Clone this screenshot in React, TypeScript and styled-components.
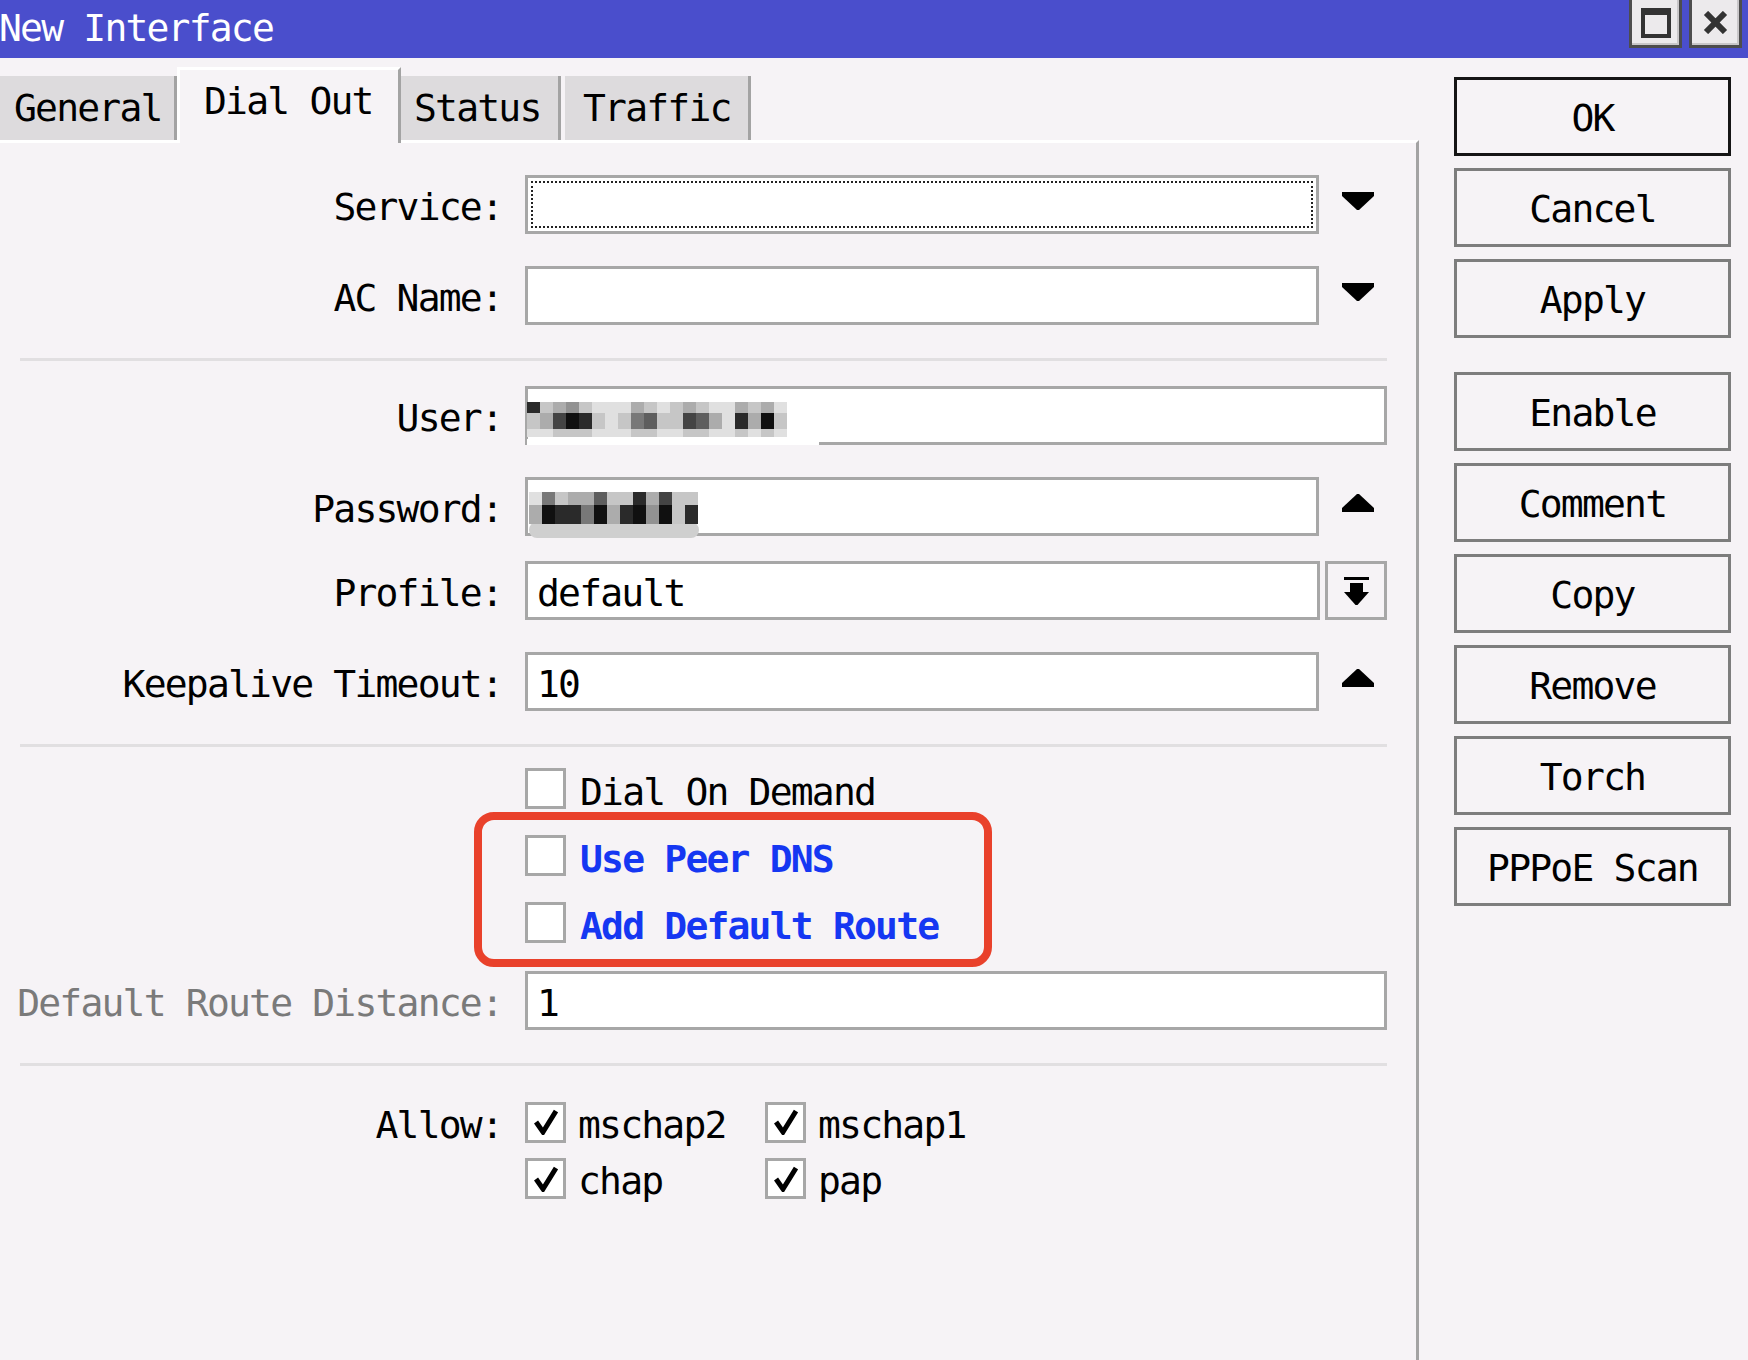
import React from 'react';
import styled, { createGlobalStyle } from 'styled-components';

const FONT = `"DejaVu Sans Mono", "Liberation Mono", monospace`;
const PAGE = '#f6f3f6';
const EDGE = '#a7a7a7';

const Global = createGlobalStyle`
  html, body { margin: 0; padding: 0; background: ${PAGE}; }
  body { font-family: ${FONT}; }
`;

const Window = styled.div`
  width: 1748px;
  height: 1360px;
  background: ${PAGE};
  display: flex;
  flex-direction: column;
  overflow: hidden;
  font-family: ${FONT};
  font-size: 38px;
  letter-spacing: -1.8px;
  color: #000;
`;

const TitleBar = styled.div`
  height: 58px;
  flex: none;
  background: #4a4ecc;
  display: flex;
  justify-content: space-between;
  align-items: flex-start;
`;

const Title = styled.div`
  color: #fff;
  height: 58px;
  display: flex;
  align-items: center;
  padding-bottom: 2px;
  box-sizing: border-box;
  margin-left: -1px;
  white-space: nowrap;
`;

const WinControls = styled.div`
  display: flex;
  gap: 7px;
  padding-right: 6px;
`;

const WinButton = styled.div`
  width: 53px;
  height: 48px;
  box-sizing: border-box;
  border: 3px solid #4d4d4d;
  border-top: none;
  background: #eceaec;
  box-shadow: inset -2px -2px 0 #c9c7c9;
  display: flex;
  align-items: center;
  justify-content: center;
`;

const Body = styled.div`
  flex: 1;
  display: flex;
  min-height: 0;
`;

const LeftPane = styled.div`
  width: 1419px;
  flex: none;
  display: flex;
  flex-direction: column;
`;

const TabRow = styled.div`
  height: 82px;
  flex: none;
  display: flex;
  align-items: flex-end;
`;

const Tab = styled.div<{ $active?: boolean; $w: number; $pl: number; $gap?: boolean }>`
  position: relative;
  z-index: ${p => (p.$active ? 2 : 1)};
  box-sizing: border-box;
  width: ${p => p.$w}px;
  height: ${p => (p.$active ? 76 : 64)}px;
  margin-bottom: ${p => (p.$active ? -3 : 0)}px;
  margin-left: ${p => (p.$gap ? 4 : 0)}px;
  padding-left: ${p => p.$pl}px;
  padding-bottom: ${p => (p.$active ? 11 : 0)}px;
  display: flex;
  align-items: center;
  white-space: nowrap;
  background: ${p => (p.$active ? PAGE : '#dddbdd')};
  border-top: ${p => (p.$active ? '3px solid #fff' : 'none')};
  border-left: ${p => (p.$active ? '3px solid #fff' : 'none')};
  border-right: 3px solid #a3a3a3;
`;

const Panel = styled.div`
  flex: 1;
  border-top: 3px solid #fff;
  border-right: 3px solid #a3a3a3;
  padding-right: 29px;
  display: flex;
  flex-direction: column;
`;

const FieldRow = styled.div<{ $mt: number; $h?: number }>`
  display: grid;
  grid-template-columns: 502px 1fr;
  column-gap: 23px;
  align-items: center;
  height: ${p => p.$h ?? 59}px;
  margin-top: ${p => p.$mt}px;
`;

const Label = styled.div<{ $muted?: boolean; $dy?: number }>`
  text-align: right;
  white-space: nowrap;
  padding-top: ${p => p.$dy ?? 4}px;
  color: ${p => (p.$muted ? '#7a7a7a' : '#000')};
`;

const Field = styled.div`
  display: flex;
  align-items: center;
  height: 100%;
  gap: 5px;
`;

const Input = styled.div<{ $focus?: boolean }>`
  flex: 1;
  height: 59px;
  box-sizing: border-box;
  border: 3px solid ${EDGE};
  background: #fff;
  display: flex;
  align-items: center;
  padding: ${p => (p.$focus ? '3px' : '4px 0 0 9px')};
  white-space: nowrap;
  overflow: visible;
`;

const FocusRing = styled.div`
  flex: 1;
  align-self: stretch;
  border: 2px dotted #222;
`;

const ArrowSlot = styled.div`
  width: 63px;
  flex: none;
  display: flex;
  padding-left: 18px;
  box-sizing: border-box;
  margin-bottom: 7px;
`;

const DropButton = styled.div`
  width: 62px;
  height: 59px;
  flex: none;
  box-sizing: border-box;
  border: 3px solid ${EDGE};
  background: ${PAGE};
  display: flex;
  align-items: center;
  justify-content: center;
`;

const Separator = styled.div<{ $mt: number }>`
  height: 3px;
  margin: ${p => p.$mt}px 0 0 20px;
  background: #e1dfe1;
`;

const CheckRow = styled.div<{ $mt: number }>`
  display: flex;
  align-items: center;
  gap: 14px;
  height: 41px;
  padding-left: 525px;
  margin-top: ${p => p.$mt}px;
  white-space: nowrap;
`;

const CheckText = styled.span<{ $accent?: boolean; $dy?: number }>`
  padding-top: ${p => p.$dy ?? 6}px;
  color: ${p => (p.$accent ? '#1537f2' : '#000')};
  font-weight: ${p => (p.$accent ? 700 : 400)};
`;

const Box = styled.div`
  width: 41px;
  height: 41px;
  flex: none;
  box-sizing: border-box;
  border: 3px solid ${EDGE};
  background: #fff;
  display: flex;
  align-items: center;
  justify-content: center;
`;

const Highlight = styled.div`
  position: relative;
  &::after {
    content: '';
    position: absolute;
    left: 474px;
    top: 3px;
    width: 518px;
    height: 155px;
    box-sizing: border-box;
    border: 8px solid #e9412b;
    border-radius: 20px;
    pointer-events: none;
  }
`;

const AllowGrid = styled.div`
  display: grid;
  grid-template-columns: 240px auto;
  align-items: center;
  height: 100%;
`;

const AllowItem = styled.div`
  display: flex;
  align-items: center;
  gap: 12px;
  white-space: nowrap;
`;

const ButtonColumn = styled.div`
  display: flex;
  flex-direction: column;
  gap: 12px;
  padding: 19px 0 0 35px;
`;

const ActionButton = styled.button<{ $primary?: boolean; $spaced?: boolean }>`
  all: unset;
  box-sizing: border-box;
  width: 277px;
  height: 79px;
  display: flex;
  align-items: center;
  justify-content: center;
  padding-top: 3px;
  border: 3px solid ${p => (p.$primary ? '#151515' : '#7d7d7d')};
  background: ${PAGE};
  font-family: ${FONT};
  font-size: 38px;
  letter-spacing: -1.8px;
  color: #000;
  white-space: nowrap;
  margin-top: ${p => (p.$spaced ? 22 : 0)}px;
`;

const MosaicSvg = styled.svg<{ $mt: number; $ml: number }>`
  align-self: flex-start;
  flex: none;
  margin-top: ${p => p.$mt}px;
  margin-left: ${p => p.$ml}px;
  overflow: visible;
`;

const shade = (v: number) => {
  const c = Math.round(250 - v * 26);
  return `rgb(${c},${c},${c})`;
};

const USER_ROWS = [
  [8, 2, 3, 4, 2, 1, 1, 1, 3, 2, 1, 2, 3, 2, 1, 1, 3, 2, 3, 1],
  [2, 3, 7, 9, 8, 2, 1, 2, 5, 6, 2, 2, 7, 6, 3, 1, 8, 3, 9, 2],
  [1, 1, 2, 2, 2, 1, 1, 1, 2, 2, 1, 1, 2, 2, 1, 1, 2, 1, 2, 1],
];
const USER_H = [11, 16, 8];

const PASS_ROWS = [
  [1, 5, 2, 3, 3, 6, 2, 2, 8, 3, 7, 2, 2],
  [3, 9, 8, 8, 5, 9, 3, 8, 9, 4, 9, 2, 8],
];
const PASS_H = [13, 19];

function Mosaic({ rows, heights, cell }: { rows: number[][]; heights: number[]; cell: number }) {
  const rects: React.ReactNode[] = [];
  let y = 0;
  rows.forEach((row, r) => {
    row.forEach((v, c) => {
      rects.push(<rect key={`${r}-${c}`} x={c * cell} y={y} width={cell} height={heights[r]} fill={shade(v)} />);
    });
    y += heights[r];
  });
  return <>{rects}</>;
}

const UserMosaic = () => (
  <MosaicSvg $mt={9} $ml={-10} width={292} height={44} viewBox="0 0 292 44">
    <rect x={0} y={37} width={292} height={6} fill="#fff" />
    <Mosaic rows={USER_ROWS} heights={USER_H} cell={13} />
  </MosaicSvg>
);

const PassMosaic = () => (
  <MosaicSvg $mt={8} $ml={-8} width={172} height={46} viewBox="0 0 172 46">
    <rect x={0} y={30} width={170} height={16} rx={8} fill="#cfcfcf" />
    <Mosaic rows={PASS_ROWS} heights={PASS_H} cell={13} />
  </MosaicSvg>
);

const DownTri = () => (
  <svg width="32" height="18" viewBox="0 0 32 18">
    <polygon points="0,0 32,0 32,4 17,18 15,18 0,4" fill="#000" />
  </svg>
);

const UpTri = () => (
  <svg width="32" height="18" viewBox="0 0 32 18">
    <polygon points="15,0 17,0 32,14 32,18 0,18 0,14" fill="#000" />
  </svg>
);

const DropIcon = () => (
  <svg width="25" height="28" viewBox="0 0 25 28">
    <rect x="0" y="0" width="25" height="3" fill="#000" />
    <rect x="6" y="6" width="13" height="9" fill="#000" />
    <polygon points="0,15 25,15 13.5,28 11.5,28" fill="#000" />
  </svg>
);

const Check = () => (
  <svg width="24" height="26" viewBox="0 0 24 26">
    <path d="M2 13 L9 23 L22 2" fill="none" stroke="#000" strokeWidth="5" strokeLinejoin="miter" />
  </svg>
);

const MaxIcon = () => (
  <svg width="30" height="30" viewBox="0 0 30 30">
    <path d="M0 0H30V30H0Z M4 7H26V26H4Z" fill="#333" fillRule="evenodd" />
  </svg>
);

const CloseIcon = () => (
  <svg width="25" height="23" viewBox="0 0 25 23">
    <path d="M3 2 L22 21 M22 2 L3 21" stroke="#333" strokeWidth="6" />
  </svg>
);

const AllowCheck = ({ label }: { label: string }) => (
  <AllowItem>
    <Box>
      <Check />
    </Box>
    <CheckText $dy={5}>{label}</CheckText>
  </AllowItem>
);

export default function App() {
  return (
    <>
      <Global />
      <Window>
        <TitleBar>
          <Title>New Interface</Title>
          <WinControls>
            <WinButton aria-label="Maximize">
              <MaxIcon />
            </WinButton>
            <WinButton aria-label="Close">
              <CloseIcon />
            </WinButton>
          </WinControls>
        </TitleBar>
        <Body>
          <LeftPane>
            <TabRow>
              <Tab $w={177} $pl={14}>General</Tab>
              <Tab $active $w={224} $pl={24}>Dial Out</Tab>
              <Tab $w={160} $pl={13}>Status</Tab>
              <Tab $w={186} $pl={18} $gap>Traffic</Tab>
            </TabRow>
            <Panel>
              <FieldRow $mt={32}>
                <Label>Service:</Label>
                <Field>
                  <Input $focus>
                    <FocusRing />
                  </Input>
                  <ArrowSlot>
                    <DownTri />
                  </ArrowSlot>
                </Field>
              </FieldRow>
              <FieldRow $mt={32}>
                <Label>AC Name:</Label>
                <Field>
                  <Input />
                  <ArrowSlot>
                    <DownTri />
                  </ArrowSlot>
                </Field>
              </FieldRow>
              <Separator $mt={33} />
              <FieldRow $mt={25}>
                <Label>User:</Label>
                <Field>
                  <Input>
                    <UserMosaic />
                  </Input>
                </Field>
              </FieldRow>
              <FieldRow $mt={32}>
                <Label>Password:</Label>
                <Field>
                  <Input>
                    <PassMosaic />
                  </Input>
                  <ArrowSlot>
                    <UpTri />
                  </ArrowSlot>
                </Field>
              </FieldRow>
              <FieldRow $mt={25}>
                <Label>Profile:</Label>
                <Field>
                  <Input>default</Input>
                  <DropButton>
                    <DropIcon />
                  </DropButton>
                </Field>
              </FieldRow>
              <FieldRow $mt={32}>
                <Label>Keepalive Timeout:</Label>
                <Field>
                  <Input>10</Input>
                  <ArrowSlot>
                    <UpTri />
                  </ArrowSlot>
                </Field>
              </FieldRow>
              <Separator $mt={33} />
              <CheckRow $mt={21}>
                <Box />
                <CheckText>Dial On Demand</CheckText>
              </CheckRow>
              <Highlight>
                <CheckRow $mt={26}>
                  <Box />
                  <CheckText $accent>Use Peer DNS</CheckText>
                </CheckRow>
                <CheckRow $mt={26}>
                  <Box />
                  <CheckText $accent>Add Default Route</CheckText>
                </CheckRow>
              </Highlight>
              <FieldRow $mt={28}>
                <Label $muted>Default Route Distance:</Label>
                <Field>
                  <Input>1</Input>
                </Field>
              </FieldRow>
              <Separator $mt={33} />
              <FieldRow $mt={31} $h={41}>
                <Label $dy={6}>Allow:</Label>
                <AllowGrid>
                  <AllowCheck label="mschap2" />
                  <AllowCheck label="mschap1" />
                </AllowGrid>
              </FieldRow>
              <FieldRow $mt={16} $h={41}>
                <span />
                <AllowGrid>
                  <AllowCheck label="chap" />
                  <AllowCheck label="pap" />
                </AllowGrid>
              </FieldRow>
            </Panel>
          </LeftPane>
          <ButtonColumn>
            <ActionButton $primary>OK</ActionButton>
            <ActionButton>Cancel</ActionButton>
            <ActionButton>Apply</ActionButton>
            <ActionButton $spaced>Enable</ActionButton>
            <ActionButton>Comment</ActionButton>
            <ActionButton>Copy</ActionButton>
            <ActionButton>Remove</ActionButton>
            <ActionButton>Torch</ActionButton>
            <ActionButton>PPPoE Scan</ActionButton>
          </ButtonColumn>
        </Body>
      </Window>
    </>
  );
}
